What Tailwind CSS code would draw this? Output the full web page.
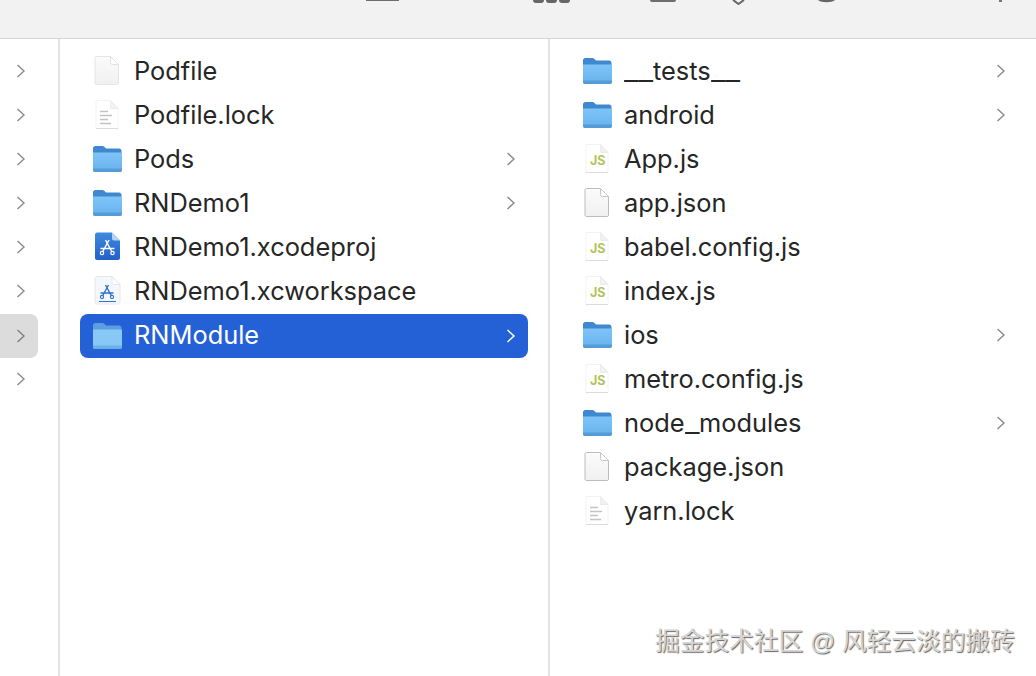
<!DOCTYPE html>
<html lang="en">

<head>
    <meta charset="UTF-8">
    <title>Finder</title>
    <script src="https://cdn.jsdelivr.net/npm/@tailwindcss/browser@4"></script>
</head>

<body class="bg-white">

    <svg width="0" height="0" class="absolute">
        <defs>
            <linearGradient id="folderFront" x1="0" y1="0" x2="0" y2="1">
                <stop offset="0" stop-color="#7fc4f8" />
                <stop offset="1" stop-color="#66b2ee" />
            </linearGradient>
            <linearGradient id="pageFill" x1="0" y1="0" x2="0" y2="1">
                <stop offset="0" stop-color="#fbfbfb" />
                <stop offset="1" stop-color="#f0f0f0" />
            </linearGradient>
            <linearGradient id="blueFill" x1="0" y1="0" x2="0" y2="1">
                <stop offset="0" stop-color="#3f8ade" />
                <stop offset="1" stop-color="#2360c8" />
            </linearGradient>
            <symbol id="folder" viewBox="0 0 30 28">
                <path d="M1 3.500C1 2 2 1 3.500 1h6.500c1.500 0 2 .5 3 1.500l1 1h13c1.500 0 2.500 1 2.500 2.500v6H1z" fill="#3d88cf" />
                <path d="M1 7.500h29V25c0 1.200-1 2-2 2H3c-1 0-2-.8-2-2z" fill="url(#folderFront)" />
                <path d="M1 23.500h29V25c0 1.200-1 2-2 2H3c-1 0-2-.8-2-2z" fill="#559bd8" />
            </symbol>
            <symbol id="folder-selected" viewBox="0 0 30 28">
                <path d="M1 3.500C1 2 2 1 3.500 1h6.500c1.500 0 2 .5 3 1.500l1 1h13c1.500 0 2.500 1 2.500 2.500v6H1z" fill="#5b9fe0" />
                <path d="M1 7.500h29V25c0 1.200-1 2-2 2H3c-1 0-2-.8-2-2z" fill="#88c8f6" />
                <path d="M1 23.500h29V25c0 1.200-1 2-2 2H3c-1 0-2-.8-2-2z" fill="#6cb0e6" />
            </symbol>
            <symbol id="doc" viewBox="0 0 30 32">
                <path d="M4.500 1.500h14l8 8V28c0 1-.5 1.500-1.500 1.500H4.500C3.500 29.500 3 29 3 28V3c0-1 .5-1.500 1.500-1.500z" fill="url(#pageFill)" stroke="#e6e6e6" />
                <path d="M18.500 1.500v6c0 1 1 2 2 2h6z" fill="#ffffff" stroke="#e0e0e0" />
            </symbol>
            <symbol id="doc-dark" viewBox="0 0 30 32">
                <path d="M4.500 1.500h14l8 8V28c0 1-.5 1.500-1.500 1.500H4.500C3.500 29.500 3 29 3 28V3c0-1 .5-1.500 1.500-1.500z" fill="url(#pageFill)" stroke="#bcbcbc" />
                <path d="M18.500 1.500v6c0 1 1 2 2 2h6z" fill="#ffffff" stroke="#c8c8c8" />
            </symbol>
            <symbol id="text" viewBox="0 0 30 32">
                <path d="M4 1.500h14.500l7.500 8v20H4z" fill="#ffffff" stroke="#f3f3f3" />
                <path d="M18.500 1.500v8h7.500z" fill="#f2f2f2" stroke="#ececec" />
                <path d="M4 29.500h22" stroke="#dcdcdc" />
                <path d="M8 12.500h8M8 16.500h12M8 20.500h8M8 24.500h11" stroke="#c2c2c2" stroke-width="1.400" />
            </symbol>
            <symbol id="js" viewBox="0 0 30 32">
                <path d="M4 1.500h14.500l7.500 8v20H4z" fill="#ffffff" stroke="#f3f3f3" />
                <path d="M18.500 1.500v8h7.500z" fill="#f2f2f2" stroke="#ececec" />
                <path d="M4 29.500h22" stroke="#dcdcdc" />
            </symbol>
            <symbol id="xcodeproj" viewBox="0 0 30 32">
                <path d="M5 1.500c-1 0-2 1-2 2V27c0 1 1 2 2 2h21c1 0 2-1 2-2V9.500l-8-8z" fill="url(#blueFill)" />
                <path d="M20 1.500v6c0 1 1 2 2 2h6z" fill="#b4d4f5" />
                <path d="M17 9L10.500 21M13.500 9L20 21M8.500 17.500h14" stroke="#ffffff" stroke-width="1.400" fill="none" />
                <circle cx="10" cy="22" r="1.700" fill="none" stroke="#ffffff" stroke-width="1.200" />
                <circle cx="20.500" cy="22" r="1.700" fill="none" stroke="#ffffff" stroke-width="1.200" />
            </symbol>
            <symbol id="xcworkspace" viewBox="0 0 30 32">
                <path d="M5 1.500c-1 0-2 1-2 2V27c0 1 1 2 2 2h21c1 0 2-1 2-2V9.500l-8-8z" fill="#f4f7fb" stroke="#e4e8ee" />
                <path d="M20 1.500v6c0 1 1 2 2 2h6z" fill="#ffffff" stroke="#e4e8ee" />
                <path d="M16.500 10L10.500 21M13.500 10L19.500 21M8.500 18h13" stroke="#2f70d2" stroke-width="1.400" fill="none" />
                <circle cx="10" cy="22" r="1.600" fill="none" stroke="#2f70d2" stroke-width="1.100" />
                <circle cx="20" cy="22" r="1.600" fill="none" stroke="#2f70d2" stroke-width="1.100" />
                <path d="M7 26.500h17" stroke="#2f70d2" stroke-width="1" />
            </symbol>
            <symbol id="chevron" viewBox="0 0 10 16">
                <path d="M1.500 2l6.500 6-6.500 6" fill="none" stroke="currentColor" stroke-width="1.400" />
            </symbol>
        </defs>
    </svg>

    <div class="w-[1036px] h-[676px] relative overflow-hidden flex flex-col font-['Inter','Liberation_Sans',sans-serif] text-[25.4px] text-[#262626]">

        <!-- toolbar, cropped at the top of the shot -->
        <div class="h-[39px] bg-[#f2f2f2] border-b border-[#d6d6d6] relative shrink-0">
            <div class="absolute left-[366px] top-0 w-[33px] h-px bg-[#6e6e6e]"></div>
            <div class="absolute left-[533px] top-0 w-[37px] h-[3px] flex gap-[2px]">
                <div class="flex-1 bg-[#666666] rounded-b-full"></div>
                <div class="flex-1 bg-[#666666] rounded-b-full"></div>
                <div class="flex-1 bg-[#666666] rounded-b-full"></div>
            </div>
            <div class="absolute left-[650px] top-0 w-[26px] h-[2px] bg-[#6e6e6e] rounded-b"></div>
            <svg class="absolute left-[732px] top-0 w-[13px] h-[5px]" viewBox="0 0 13 5"><path d="M1 0l5.500 4L12 0" fill="none" stroke="#666666" stroke-width="2" /></svg>
            <svg class="absolute left-[818px] top-0 w-[17px] h-[3px]" viewBox="0 0 17 3"><path d="M0 0c3 3 14 3 17 0z" fill="#666666" /></svg>
            <div class="absolute left-[999px] top-0 w-[3px] h-[2px] bg-[#777777]"></div>
        </div>

        <div class="flex flex-1 min-h-0">

            <!-- first column, only the arrows are in view -->
            <div class="w-[60px] shrink-0 border-r-2 border-[#e3e3e3] pt-[10px]">
                <div class="w-[38px] h-[44px] pr-[12px] flex items-center justify-end text-[#8a8a8a]"><svg class="w-[10px] h-[16px]"><use href="#chevron" /></svg></div>
                <div class="w-[38px] h-[44px] pr-[12px] flex items-center justify-end text-[#8a8a8a]"><svg class="w-[10px] h-[16px]"><use href="#chevron" /></svg></div>
                <div class="w-[38px] h-[44px] pr-[12px] flex items-center justify-end text-[#8a8a8a]"><svg class="w-[10px] h-[16px]"><use href="#chevron" /></svg></div>
                <div class="w-[38px] h-[44px] pr-[12px] flex items-center justify-end text-[#8a8a8a]"><svg class="w-[10px] h-[16px]"><use href="#chevron" /></svg></div>
                <div class="w-[38px] h-[44px] pr-[12px] flex items-center justify-end text-[#8a8a8a]"><svg class="w-[10px] h-[16px]"><use href="#chevron" /></svg></div>
                <div class="w-[38px] h-[44px] pr-[12px] flex items-center justify-end text-[#8a8a8a]"><svg class="w-[10px] h-[16px]"><use href="#chevron" /></svg></div>
                <div class="w-[38px] h-[44px] mt-px -mb-px pr-[12px] flex items-center justify-end text-[#808080] bg-[#dcdcdc] rounded-r-lg"><svg class="w-[10px] h-[16px]"><use href="#chevron" /></svg></div>
                <div class="w-[38px] h-[44px] pr-[12px] flex items-center justify-end text-[#8a8a8a]"><svg class="w-[10px] h-[16px]"><use href="#chevron" /></svg></div>
            </div>

            <!-- second column -->
            <div class="w-[490px] shrink-0 border-r-2 border-[#e3e3e3] pt-[10px] pl-[20px] pr-[20px]">
                <div class="h-[44px] flex items-center pl-[12px]">
                    <svg class="w-[30px] h-[32px] shrink-0"><use href="#doc" /></svg>
                    <span class="ml-[12px] pt-px">Podfile</span>
                </div>
                <div class="h-[44px] flex items-center pl-[12px]">
                    <svg class="w-[30px] h-[32px] shrink-0"><use href="#text" /></svg>
                    <span class="ml-[12px] pt-px">Podfile.lock</span>
                </div>
                <div class="h-[44px] flex items-center pl-[12px] pr-[12px]">
                    <svg class="w-[30px] h-[28px] shrink-0"><use href="#folder" /></svg>
                    <span class="ml-[12px] pt-px flex-1">Pods</span>
                    <svg class="w-[10px] h-[16px] text-[#8a8a8a]"><use href="#chevron" /></svg>
                </div>
                <div class="h-[44px] flex items-center pl-[12px] pr-[12px]">
                    <svg class="w-[30px] h-[28px] shrink-0"><use href="#folder" /></svg>
                    <span class="ml-[12px] pt-px flex-1">RNDemo1</span>
                    <svg class="w-[10px] h-[16px] text-[#8a8a8a]"><use href="#chevron" /></svg>
                </div>
                <div class="h-[44px] flex items-center pl-[12px]">
                    <svg class="w-[30px] h-[32px] shrink-0"><use href="#xcodeproj" /></svg>
                    <span class="ml-[12px] pt-px">RNDemo1.xcodeproj</span>
                </div>
                <div class="h-[44px] flex items-center pl-[12px]">
                    <svg class="w-[30px] h-[32px] shrink-0"><use href="#xcworkspace" /></svg>
                    <span class="ml-[12px] pt-px">RNDemo1.xcworkspace</span>
                </div>
                <div class="h-[44px] mt-px flex items-center pl-[12px] pr-[12px] bg-[#2561d6] rounded-lg text-white">
                    <svg class="w-[30px] h-[28px] shrink-0 -mt-px"><use href="#folder-selected" /></svg>
                    <span class="ml-[12px] pb-px flex-1">RNModule</span>
                    <svg class="w-[10px] h-[16px] text-white"><use href="#chevron" /></svg>
                </div>
            </div>

            <!-- third column -->
            <div class="flex-1 pt-[10px] pl-[32px] pr-[30px]">
                <div class="h-[44px] flex items-center">
                    <svg class="w-[30px] h-[28px] shrink-0"><use href="#folder" /></svg>
                    <span class="ml-[12px] pt-px flex-1"><span class="inline-block w-[29px] origin-left scale-x-[1.26]">__</span>tests<span class="inline-block w-[29px] origin-left scale-x-[1.26]">__</span></span>
                    <svg class="w-[10px] h-[16px] text-[#8a8a8a]"><use href="#chevron" /></svg>
                </div>
                <div class="h-[44px] flex items-center">
                    <svg class="w-[30px] h-[28px] shrink-0"><use href="#folder" /></svg>
                    <span class="ml-[12px] pt-px flex-1">android</span>
                    <svg class="w-[10px] h-[16px] text-[#8a8a8a]"><use href="#chevron" /></svg>
                </div>
                <div class="h-[44px] flex items-center">
                    <div class="relative w-[30px] h-[32px] shrink-0">
                        <svg class="w-[30px] h-[32px]"><use href="#js" /></svg>
                        <span class="absolute left-[8px] top-[11px] text-[12.5px] leading-[14px] font-bold text-[#b5c25a]">JS</span>
                    </div>
                    <span class="ml-[12px] pt-px">App.js</span>
                </div>
                <div class="h-[44px] flex items-center">
                    <svg class="w-[30px] h-[32px] shrink-0"><use href="#doc-dark" /></svg>
                    <span class="ml-[12px] pt-px">app.json</span>
                </div>
                <div class="h-[44px] flex items-center">
                    <div class="relative w-[30px] h-[32px] shrink-0">
                        <svg class="w-[30px] h-[32px]"><use href="#js" /></svg>
                        <span class="absolute left-[8px] top-[11px] text-[12.5px] leading-[14px] font-bold text-[#b5c25a]">JS</span>
                    </div>
                    <span class="ml-[12px] pt-px">babel.config.js</span>
                </div>
                <div class="h-[44px] flex items-center">
                    <div class="relative w-[30px] h-[32px] shrink-0">
                        <svg class="w-[30px] h-[32px]"><use href="#js" /></svg>
                        <span class="absolute left-[8px] top-[11px] text-[12.5px] leading-[14px] font-bold text-[#b5c25a]">JS</span>
                    </div>
                    <span class="ml-[12px] pt-px">index.js</span>
                </div>
                <div class="h-[44px] flex items-center">
                    <svg class="w-[30px] h-[28px] shrink-0"><use href="#folder" /></svg>
                    <span class="ml-[12px] pt-px flex-1">ios</span>
                    <svg class="w-[10px] h-[16px] text-[#8a8a8a]"><use href="#chevron" /></svg>
                </div>
                <div class="h-[44px] flex items-center">
                    <div class="relative w-[30px] h-[32px] shrink-0">
                        <svg class="w-[30px] h-[32px]"><use href="#js" /></svg>
                        <span class="absolute left-[8px] top-[11px] text-[12.5px] leading-[14px] font-bold text-[#b5c25a]">JS</span>
                    </div>
                    <span class="ml-[12px] pt-px">metro.config.js</span>
                </div>
                <div class="h-[44px] flex items-center">
                    <svg class="w-[30px] h-[28px] shrink-0"><use href="#folder" /></svg>
                    <span class="ml-[12px] pt-px flex-1">node<span class="inline-block w-[14.500px] origin-left scale-x-[1.26]">_</span>modules</span>
                    <svg class="w-[10px] h-[16px] text-[#8a8a8a]"><use href="#chevron" /></svg>
                </div>
                <div class="h-[44px] flex items-center">
                    <svg class="w-[30px] h-[32px] shrink-0"><use href="#doc-dark" /></svg>
                    <span class="ml-[12px] pt-px">package.json</span>
                </div>
                <div class="h-[44px] flex items-center">
                    <svg class="w-[30px] h-[32px] shrink-0"><use href="#text" /></svg>
                    <span class="ml-[12px] pt-px">yarn.lock</span>
                </div>
            </div>
        </div>

        <!-- watermark -->
        <div class="absolute left-[655px] top-[627px] text-[24.7px] leading-[30px] text-[#d6d6d6] font-['Liberation_Sans','Noto_Sans_CJK_SC',sans-serif] [text-shadow:1px_1px_1px_#666666]">掘金技术社区 @ 风轻云淡的搬砖</div>
    </div>

</body>

</html>
